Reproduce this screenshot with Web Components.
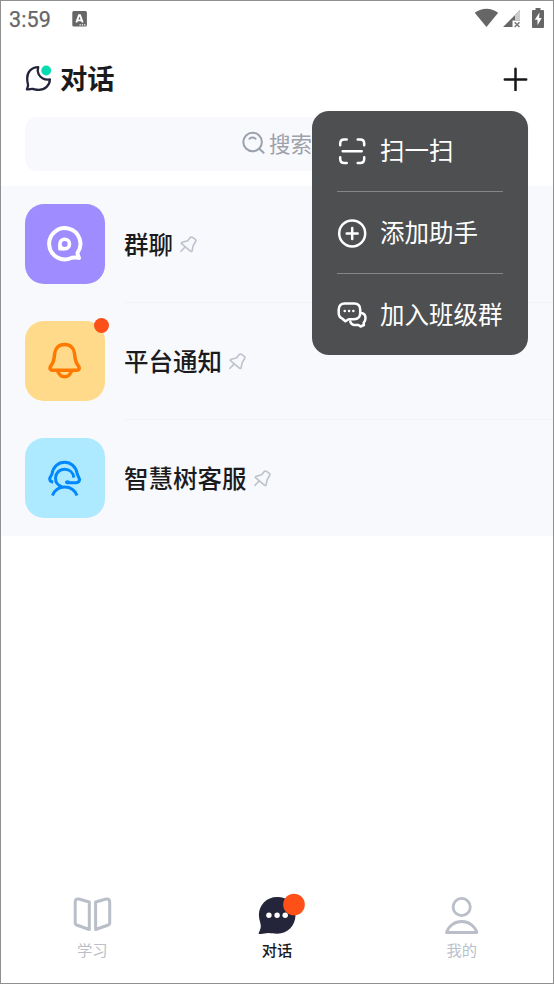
<!DOCTYPE html>
<html lang="zh-CN">
<head>
<meta charset="utf-8">
<title>对话</title>
<style>
html,body{margin:0;height:100%;background:#fff}
body{font-family:"Noto Sans CJK SC","Noto Sans",sans-serif}
</style>
</head>
<body>
<chat-page></chat-page>
<script>
const define = (name, html) => customElements.define(name, class extends HTMLElement {
  constructor() {
    super();
    const t = document.createElement('template');
    t.innerHTML = html;
    this.attachShadow({mode: 'open'}).append(t.content.cloneNode(true));
  }
});

define('status-bar', `
<style>
:host{display:flex;height:36px;align-items:center;padding:0 8px 0 8px;box-sizing:border-box;color:#666}
.time{font:400 21.500px/36px Roboto,sans-serif;letter-spacing:.1px;width:63px;padding-top:2px;box-sizing:border-box;-webkit-text-stroke:.25px #666}
.gap{flex:1}
svg{display:block}
</style>
<span class="time">3:59</span>
<svg width="16" height="16" viewBox="72 10.500 16 16"><rect x="72.300" y="10.600" width="14.600" height="15.500" rx="1.500" fill="#666"/><path d="M76.300 22 79 14.600h1L82.700 22M77.400 19.900h4.200" fill="none" stroke="#fff" stroke-width="1.900"/><path d="M79.500 24.300h1.300m1 0h1.300m1 0h1.300" stroke="#fff" stroke-width="1.300"/></svg>
<span class="gap"></span>
<svg width="71" height="22" viewBox="474 8 71 22"><path d="M474.700 12.700Q486.500 5 498.200 12.700L486.500 27Z" fill="#666"/><path d="M520 10v10.500h-7.500v6.500h-9.500Z" fill="#666"/><path d="M520 10v10.500h-5V15Z" fill="#ccc"/><path d="m514.700 22.200 4.800 4.800m0-4.800-4.800 4.800" stroke="#777" stroke-width="1.500"/><path d="M535.500 8h5v2h2.500q1 0 1 1v16q0 1-1 1h-10q-1 0-1-1V11q0-1 1-1h2.500Z" fill="#666"/><path d="m539.500 12.500-4.700 7.200h2.700v5.500l4.200-7.300h-2.600Z" fill="#fff"/></svg>
`);

define('page-header', `
<style>
:host{display:flex;height:80px;align-items:center;padding:2px 25px 0 24px;box-sizing:border-box;color:#1b1b1d}
h1{margin:0 auto 0 7px;padding-bottom:2px;font-size:27.300px;line-height:40px;font-weight:700}
svg{display:block}
</style>
<svg width="28" height="28" viewBox="25 64 28 28" fill="none"><path d="M38.200 67.100C31 67.200 27.200 72.500 27.200 78.200c0 4.800 1.100 5.700.8 7.700-.1 1.100-.7 2.200-1.100 3.400 2.500.3 4-.6 6.200-.3 1.500.2 2.800.8 5.700.8 6.100 0 11.100-4.500 11.100-10.500-5.200 1-9.700-1.500-11.300-5.200-1-2.300-1.200-4.500-.4-7Z" stroke="#24243a" stroke-width="2.300" stroke-linejoin="round"/><circle cx="46.200" cy="70.500" r="4.900" fill="#07ddb0"/></svg>
<h1><slot></slot></h1>
<svg width="25" height="25" viewBox="503 66.500 25 25" fill="none"><path d="M504.800 80h21.400M515.500 69.300v21.400" stroke="#17171a" stroke-width="2.500" stroke-linecap="round"/></svg>
`);

define('search-box', `
<style>
:host{display:flex;height:54px;margin:0 24px;background:#f8f9fd;border-radius:12px;align-items:center;justify-content:center;gap:3px;color:#9da1ab;font-size:21.500px;line-height:32px}
span{padding-bottom:2px}
svg{display:block}
</style>
<svg width="24" height="26" viewBox="242 131 24 26" fill="none" stroke="#9ba1ad" stroke-width="2" stroke-linecap="round"><circle cx="252.600" cy="142" r="9.300"/><path d="m259.300 148.800 4.300 4M249.400 138.700q3-2.200 6.200 0"/></svg>
<span><slot></slot></span>
`);

define('chat-row', `
<style>
:host{display:flex;height:117px;align-items:center;padding-left:24px;box-sizing:border-box;gap:19px;background:#f8f9fd}
.tile{position:relative;width:80px;height:80px;margin-bottom:1px;border-radius:19px;background:var(--tile);display:flex}
.dot{display:none;position:absolute;left:68.700px;top:-3.500px;width:15.500px;height:15.500px;border-radius:50%;background:#fc5018}
:host([unread]) .dot{display:block}
.body{flex:1;height:100%;display:flex;align-items:center;gap:7px;border-bottom:1px solid #f3f3f4;box-sizing:border-box;font-size:24.500px;line-height:36px;font-weight:500;color:#1b1b1d}
:host([last]) .body{border-color:transparent}
:host([last]){height:116px}
:host([last]) .tile{margin:0}
svg{display:block}
</style>
<div class="tile"><slot name="icon"></slot><span class="dot"></span></div>
<div class="body"><span><slot></slot></span>
<svg width="17" height="18" viewBox="180 235 17 18" fill="none" stroke="#bec2cb" stroke-width="1.600" stroke-linejoin="round" stroke-linecap="round"><path d="m181 251.300 4.200-4.400M181.700 242.600q-.8.500-.2 1.100l9.200 7.700q.8.400 1.300-.4l1.200-5.400 2.400-4.100q.7-1.100-.3-2.100l-2.800-2q-1.300-.7-2.500.3l-2.300 3.100Z"/></svg></div>
`);

define('pop-menu', `
<style>
:host{display:flex;flex-direction:column;width:216px;height:244px;padding:0 25px 0 25px;box-sizing:border-box;border-radius:17px;background:#4e4f51;color:#fff}
</style><slot></slot>
`);

define('menu-item', `
<style>
:host{display:flex;height:82px;align-items:center;gap:12.600px;font-size:24.500px;line-height:36px;border-bottom:1px solid #858688;white-space:nowrap;box-sizing:border-box}
:host(:first-child){height:81px}
:host(:last-child){border-bottom:0;height:81px}
span{padding-bottom:1px}
:host(:first-child) span{padding-bottom:2px}
</style><slot name="icon"></slot><span><slot></slot></span>
`);

define('tab-item', `
<style>
:host{display:flex;width:184.700px;flex-direction:column;align-items:center;color:#bbbfca;font-size:15.300px;line-height:22px}
:host([active]){color:#1b1b1d;font-weight:500}
span{margin-top:-2px}
</style><slot name="icon"></slot><span><slot></slot></span>
`);

define('tab-bar', `
<style>:host{display:flex;height:91px;justify-content:center;margin:0 -2px}</style><slot></slot>
`);

define('chat-page', `
<style>
:host{display:flex;flex-direction:column;position:relative;width:554px;height:984px;box-sizing:border-box;border:1px solid #909090;background:#fff;overflow:hidden}
search-box{flex:none}
main{margin-top:15px;flex:1}
pop-menu{position:absolute;left:311.400px;top:110px}
svg{display:block;flex:none}
</style>
<status-bar></status-bar>
<page-header>对话</page-header>
<search-box>搜索</search-box>
<main>
<chat-row style="--tile:#9f8cff">群聊<svg slot="icon" width="80" height="80" viewBox="25 204.500 80 80" fill="none" stroke="#fff"><path d="M77.500 253.300A15.600 15.600 0 1 0 71.800 258.200Q75.800 257.500 79 258.400Q77.600 255.500 77.500 253.300Z" stroke-width="4" stroke-linejoin="round"/><circle cx="64.700" cy="244.500" r="4.800" stroke-width="3.600"/><path d="M58.100 245v4.500q0 1.500 1.500 1.500h5l-3.200-3Z" fill="#fff" stroke="none"/></svg></chat-row>
<chat-row unread style="--tile:#ffda8b">平台通知<svg slot="icon" width="80" height="80" viewBox="25 321.500 80 80" fill="none" stroke="#ff7900" stroke-width="3.500" stroke-linejoin="round"><path d="M64.600 345c-6.200 0-9.500 4.300-10 9.500-.4 4.600-.6 6.700-2.200 9.300l-2.200 3.700q-.7 3 2 3.200h24.800q2.700-.2 2-3.200L76.800 363.800c-1.600-2.600-1.800-4.700-2.200-9.300-.5-5.200-3.800-9.500-10-9.500ZM57.600 371.500c1.300 3.500 3.500 5.700 7 5.700s5.700-2.200 7-5.700"/></svg></chat-row>
<chat-row last style="--tile:#adeaff">智慧树客服<svg slot="icon" width="80" height="80" viewBox="25 438 80 80" fill="none" stroke="#0088ff" stroke-width="3"><path d="M53.200 482.300q-3.800-.8-3.500-4l2.200-4.200C53 466.300 58.500 462.300 64.600 462.300s11.600 4 12.700 11.800l2.300 5.300q-.2 3-3.500 3.400l-8.800-.1M73.800 477.700C73.300 472.500 69.500 469.300 64.700 469.300c-5.500 0-9.200 4-9.200 8.800 0 4.200 2.600 7.500 6.500 8.700M52.400 495.500c2-5.200 6.700-8.600 12.300-8.600s10.300 3.400 12.300 8.600" stroke-linejoin="round"/><ellipse cx="67.500" cy="482.300" rx="2.500" ry="2" fill="#0088ff" stroke="none"/></svg></chat-row>
</main>
<tab-bar>
<tab-item>学习<svg slot="icon" width="40" height="48" viewBox="72 892 40 48" fill="none" stroke="#b9bec8" stroke-width="3" stroke-linejoin="round"><path d="m89.300 902-10.500-3q-3.600-.5-3.600 3v21.200q0 1.400 1.400 1.800l12.700 4.500ZM95.600 902l10.500-3q3.600-.5 3.600 3v21.200q0 1.400-1.400 1.800l-12.700 4.500Z"/></svg></tab-item>
<tab-item active>对话<svg slot="icon" width="56" height="48" viewBox="249 892 56 48"><path d="M277.200 897C266.500 897 258.900 905 258.900 915c0 4.500 2 8 1.900 11.500-.1 2.600-1.600 4.800-2.300 7.200 4 .8 6.400-.7 10-.6 2.600.1 4.400.7 8.700.7 10.700 0 18.300-8.300 18.300-18.700C295.500 904.700 287.900 897 277.200 897Z" fill="#24243a"/><g fill="#fff"><circle cx="268.900" cy="915.300" r="2.700"/><circle cx="277.100" cy="915.300" r="2.700"/><circle cx="285.200" cy="915.300" r="2.700"/></g><circle cx="294" cy="904.500" r="10.800" fill="#ff5018"/></svg></tab-item>
<tab-item>我的<svg slot="icon" width="40" height="48" viewBox="442 892 40 48" fill="none" stroke="#b9bec8" stroke-width="2.800" stroke-linejoin="round"><circle cx="461.700" cy="907" r="8.600"/><path d="M446.500 932.500c2-6.500 8-11 15.200-11s13.200 4.500 15.200 11Z"/></svg></tab-item>
</tab-bar>
<pop-menu>
<menu-item>扫一扫<svg slot="icon" width="30" height="30" viewBox="337.300 136.500 30 30" fill="none" stroke="#fff" stroke-width="2.500" stroke-linecap="round"><path d="M347 140h-2.500q-4 0-4 4v1.800M358 140h2.500q4 0 4 4v1.800M347 163.500h-2.500q-4 0-4-4v-1.800M358 163.500h2.500q4 0 4-4v-1.800M343 151.800h19"/></svg></menu-item>
<menu-item>添加助手<svg slot="icon" width="30" height="30" viewBox="337.300 217.800 30 30" fill="none" stroke="#fff" stroke-width="2.500" stroke-linecap="round"><circle cx="352.500" cy="233.200" r="13"/><path d="M347 233.200h11m-5.500-5.500v11"/></svg></menu-item>
<menu-item>加入班级群<svg slot="icon" width="30" height="30" viewBox="337.300 299.500 30 30" fill="none" stroke="#fff" stroke-width="2.500" stroke-linejoin="round" stroke-linecap="round"><path d="M345 303h9.500q6 .2 6 6v3.500q0 6-6 6.200H349l-3.300 2.100-3-2.600q-3.700-1.500-3.700-5.700V309q.2-5.800 6-6Z"/><path d="M361.800 312.500q4 .8 4 5 0 3.300-1.800 4.700l.2 2.300-3.300 1.500-2.200-1.500h-4.200q-3.200-.5-3.900-3.500M345 310.500h.1m4.200 0h.1m4.200 0h.1"/></svg></menu-item>
</pop-menu>
`);
</script>
</body>
</html>
